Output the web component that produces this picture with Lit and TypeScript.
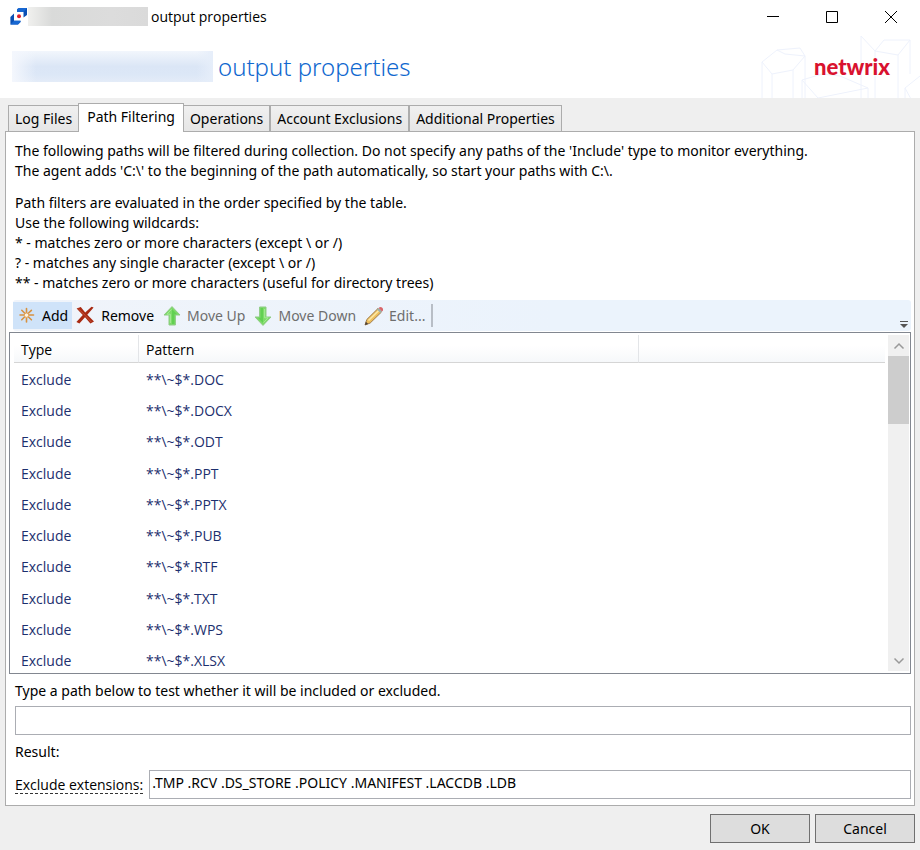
import { LitElement, html, css, svg } from "lit";
import { customElement, state } from "lit/decorators.js";
import { classMap } from "lit/directives/class-map.js";

const TABS = ["Log Files", "Path Filtering", "Operations", "Account Exclusions", "Additional Properties"];

const PATTERNS = ["DOC", "DOCX", "ODT", "PPT", "PPTX", "PUB", "RTF", "TXT", "WPS", "XLSX"];

const arrow = (down: boolean) => svg`
  <g transform=${down ? "rotate(180 10 10)" : ""}>
    <path d="M10 0.6 L18 9 H13.4 V19 H7 V9 H2 Z" fill="#7ddb68" stroke="#8fcb85" stroke-width="1"/>
    <path d="M10 3 L15 8.2 H12.4 V18 H10 Z" fill="#62d052"/>
    <path d="M9.4 3.4 L5 8.2 H8.4 V17" fill="none" stroke="#a5eb94"/>
  </g>`;

const ICONS = {
  add: svg`
    <g stroke="#d8913f" stroke-width="1.6" stroke-linecap="round">
      <path d="M9.5 2.5 V7 M9.5 11.5 V16 M3 9 H7.5 M12 9 H16.5"/>
      <path d="M4.8 4.3 L8 7.5 M11 10.5 L14.4 13.8 M14.4 4.3 L11 7.5 M8 10.5 L4.8 13.8"/>
    </g>
    <circle cx="9.5" cy="9.2" r="2.2" fill="#fff3dc" stroke="#e0a25a" stroke-width="1"/>`,
  remove: svg`
    <path d="M0.6 2.4 L4.8 1 L9.2 6.4 L15.5 0.8 L17.6 1.6 L11.3 8.8 L18 15.4 L14.4 17.6 L9 11.2 L3.4 17.6 L0.4 16 L6.8 9 Z" fill="#a82a12"/>
    <path d="M2.4 2.8 L9.2 9.4 L15.3 16" fill="none" stroke="#c4543a" stroke-width="1"/>`,
  up: arrow(false),
  down: arrow(true),
  edit: svg`
    <path d="M1 19 L2.8 13.5 L14 2.5 L17.5 6 L6.2 17 Z" fill="#eebf5c" stroke="#a07c4a" stroke-width="1"/>
    <path d="M4.5 14.5 L14.8 4.5" stroke="#fbe8a5" stroke-width="1.6"/>
    <path d="M13 3.5 L14.6 2 L18 5.4 L16.5 7 Z" fill="#9fb0a8"/>
    <path d="M14.6 2 L16 1 Q19.5 1 19 4.5 L18 5.6 Z" fill="#d9666a"/>
    <path d="M1 19 L1.9 15.8 L4.2 18 Z" fill="#4a4038"/>`,
};

const TOOLS: { label: string; icon: keyof typeof ICONS; disabled?: boolean; hot?: boolean }[] = [
  { label: "Add", icon: "add", hot: true },
  { label: "Remove", icon: "remove" },
  { label: "Move Up", icon: "up", disabled: true },
  { label: "Move Down", icon: "down", disabled: true },
  { label: "Edit...", icon: "edit", disabled: true },
];

@customElement("app-root")
class AppRoot extends LitElement {
  @state() private tab = 1;

  static styles = css`
    :host {
      display: flex;
      flex-direction: column;
      min-height: 100vh;
      box-sizing: border-box;
      background: #efefef;
      color: #000;
      font: 14px/20px "Noto Sans", "Open Sans", sans-serif;
    }
    * { box-sizing: border-box; }
    button, input { font: inherit; color: inherit; border-radius: 0; }
    button { padding: 0; border: 0; background: none; white-space: nowrap; }
    p { margin: 0; }

    .titlebar { display: flex; align-items: center; height: 33px; padding-left: 10px; background: #fff; }
    .app-icon { width: 18px; height: 18px; }
    .masked { background: linear-gradient(90deg, #f0f0ee, #d9dad9 20%, #dcdcdc 70%, #dadada); width: 120px; height: 19px; }
    .title { flex: 1; padding-left: 3px; font-family: "Open Sans", sans-serif; }
    .caption { width: 59px; height: 33px; display: grid; place-items: center; }
    .caption svg { width: 12px; height: 12px; }

    .banner { display: flex; align-items: center; height: 65px; padding: 2px 0 0 12px; background: #fff; overflow: hidden; }
    .masked-name {
      width: 201px; height: 31px;
      background: linear-gradient(90deg, #f4f7fd, transparent 12%, transparent 92%, #e6eefa),
        linear-gradient(#f2f6fc, #dbe6f6 50%, #dce7f7 75%, #e4ecf8);
    }
    h1 {
      flex: 1; margin: 0; padding-left: 5px; color: #0f68cf;
      font: 300 24px/34px "Noto Sans", "Open Sans", sans-serif;
    }
    .brand { position: relative; width: 160px; height: 65px; display: flex; align-items: center; padding-left: 54px; }
    .brand .art { position: absolute; inset: 0; width: 160px; height: 65px; }
    .logo { position: relative; font: 900 22px/30px Lato, sans-serif; color: #d9122f; }

    .tabs { display: flex; align-items: flex-end; height: 33px; padding-left: 8px; }
    .tab {
      height: 26px; padding: 0 6px; border: 1px solid #acacac; border-bottom: 0;
      background: linear-gradient(#f0f0f0, #e6e6e6);
    }
    .tab.on { z-index: 1; height: 29px; margin: 0 -1px -1px; padding: 0 8px 2px; background: #fff; }

    .panel {
      flex: 1; display: flex; flex-direction: column; margin: 0 5px;
      padding: 9px 3px 6px; border: 1px solid #acacac; background: #fff;
    }
    .note { padding: 0 6px; }
    .note + .note { margin-top: 12px; }

    .toolbar {
      display: flex; align-items: center; height: 31px; margin: 7px 0 1px 4px;
      background: linear-gradient(90deg, #f0f4fa, #ebf3fc 60%); border-radius: 3px;
    }
    .tool { display: flex; align-items: center; gap: 5px; height: 27px; padding: 0 4px; }
    .tool.hot { background: #cfe3f9; }
    .tool:disabled { color: #6e6e6e; }
    .tool svg { width: 20px; height: 20px; }
    .sep { width: 2px; height: 23px; margin-left: 2px; background: #b8bec6; }
    .more { margin-left: auto; align-self: flex-end; width: 14px; height: 14px; display: grid; place-items: center; }
    .more svg { width: 8px; height: 8px; }

    .list { flex: 1 1 0; min-height: 342px; display: flex; border: 1px solid #828790; padding: 2px 1px 2px 4px; }
    .viewport { flex: 1 1 0; height: 336px; overflow: hidden; }
    table {
      width: 100%; height: 341px; table-layout: fixed; border-collapse: separate; border-spacing: 0;
      font-family: "Open Sans", sans-serif;
    }
    th, td { padding: 2px 0 0 7px; text-align: left; font-weight: 400; }
    th { height: 28px; border-bottom: 1px solid #d5d5d5; background: linear-gradient(#fff 40%, #f6f8fa); }
    th + th { border-left: 1px solid #e3e5e8; }
    td { color: #1c2f6e; }
    td + td { padding-left: 8px; }
    .c-type { width: 124px; }
    .c-pattern { width: 500px; }
    .scroll { display: flex; flex-direction: column; width: 21px; margin-left: 3px; background: #f0f0f0; }
    .scroll button { height: 21px; display: grid; place-items: center; }
    .scroll svg { width: 12px; height: 8px; }
    .thumb { height: 68px; margin-bottom: auto; background: #cdcdcd; }

    .test { display: flex; flex-direction: column; gap: 5px; padding: 7px 0 0 6px; }
    .row { display: flex; align-items: center; gap: 6px; padding: 8px 0 0 6px; }
    input { height: 29px; min-width: 0; padding: 0 2px 4px; border: 1px solid #abadb3; background: #fff; outline: 0; }
    .row input { flex: 1; }
    .hint { line-height: 17px; border-bottom: 1px dashed #333; font-family: "Open Sans", sans-serif; }
    .result { padding: 7px 6px 0; }

    .footer { display: flex; justify-content: flex-end; gap: 5px; padding: 8px 5px 7px; }
    .footer button { width: 100px; height: 29px; padding-top: 1px; border: 1px solid #707070; background: #ddd; }
  `;

  render() {
    return html`
      <header class="titlebar">
        <svg class="app-icon" viewBox="0 0 18 18">
          <path d="M7 1.2 L9 0 H17 V7 L13.5 9.5 V4 H7 Z" fill="#0a50b4"/>
          <path d="M7 1.2 L9 0 H17 L13.5 4 H7 Z" fill="#1767d2"/>
          <path d="M4 5.5 V12.7 H10.5 V14 L8 16.6 H0.4 V9 Z" fill="#0a50b4"/>
          <path d="M0.4 16.6 L4 12.7 H10.5 V14 L8 16.6 Z" fill="#1767d2"/>
          <circle cx="9" cy="8.2" r="2" fill="#e0202c"/>
        </svg>
        <span class="masked"></span>
        <span class="title">output properties</span>
        <button class="caption" aria-label="Minimize">
          <svg viewBox="0 0 12 12"><path d="M0 5.5 H12" stroke="#000"/></svg>
        </button>
        <button class="caption" aria-label="Maximize">
          <svg viewBox="0 0 12 12"><path d="M0.5 0.5 H11.5 V11.5 H0.5 Z" fill="none" stroke="#000"/></svg>
        </button>
        <button class="caption" aria-label="Close">
          <svg viewBox="0 0 12 12"><path d="M0 0 L12 12 M12 0 L0 12" stroke="#000"/></svg>
        </button>
      </header>

      <section class="banner">
        <span class="masked-name"></span>
        <h1>output properties</h1>
        <div class="brand">
          <svg class="art" viewBox="0 0 160 65" fill="none" stroke="#eef2fc">
            <path d="M2 28 L17 16 L40 14 L45 22 L33 36 L12 40 Z M2 28 V65 M12 40 V65 M33 36 V65 M45 22 V65 M17 16 L25 20 L45 22"/>
            <path d="M42 46 L62 40 L80 42 L108 54 V65 M42 46 L58 64 M42 46 V65 M58 64 L108 54"/>
            <path d="M101 2 L115 17 V65 M101 2 V65 M115 17 L124 6 H150 L138 21 Z M138 21 V65 M150 6 V40"/>
            <path d="M145 54 L160 42 M145 54 L151 65 M145 54 V65"/>
          </svg>
          <span class="logo">netwrix</span>
        </div>
      </section>

      <nav class="tabs" role="tablist">
        ${TABS.map((t, i) => html`
          <button role="tab" aria-selected=${i === this.tab ? "true" : "false"}
            class=${classMap({ tab: true, on: i === this.tab })}
            @click=${() => (this.tab = i)}>${t}</button>`)}
      </nav>

      <main class="panel">
        <div class="note">
          <p>The following paths will be filtered during collection. Do not specify any paths of the 'Include' type to monitor everything.</p>
          <p>The agent adds 'C:\\' to the beginning of the path automatically, so start your paths with C:\\.</p>
        </div>
        <div class="note">
          <p>Path filters are evaluated in the order specified by the table.</p>
          <p>Use the following wildcards:</p>
          <p>* - matches zero or more characters (except \\ or /)</p>
          <p>? - matches any single character (except \\ or /)</p>
          <p>** - matches zero or more characters (useful for directory trees)</p>
        </div>

        <div class="toolbar" role="toolbar">
          ${TOOLS.map((t) => html`
            <button class=${classMap({ tool: true, hot: !!t.hot })} ?disabled=${t.disabled}>
              <svg viewBox="0 0 20 20">${ICONS[t.icon]}</svg>${t.label}
            </button>`)}
          <span class="sep"></span>
          <button class="more" aria-label="More">
            <svg viewBox="0 0 8 8"><path d="M0 1.5 H8" stroke="#555"/><path d="M0 4 H8 L4 8 Z" fill="#555"/></svg>
          </button>
        </div>

        <div class="list">
          <div class="viewport">
            <table>
              <colgroup><col class="c-type"><col class="c-pattern"><col></colgroup>
              <thead><tr><th>Type</th><th>Pattern</th><th></th></tr></thead>
              <tbody>
                ${PATTERNS.map((p) => html`<tr><td>Exclude</td><td>**\\~$*.${p}</td><td></td></tr>`)}
              </tbody>
            </table>
          </div>
          <div class="scroll">
            <button aria-label="Scroll up">
              <svg viewBox="0 0 12 8"><path d="M1.5 6.5 L6 2 L10.5 6.5" fill="none" stroke="#999" stroke-width="1.5"/></svg>
            </button>
            <div class="thumb"></div>
            <button aria-label="Scroll down">
              <svg viewBox="0 0 12 8"><path d="M1.5 1.5 L6 6 L10.5 1.5" fill="none" stroke="#999" stroke-width="1.5"/></svg>
            </button>
          </div>
        </div>

        <div class="test">
          <label for="path">Type a path below to test whether it will be included or excluded.</label>
          <input id="path" type="text">
        </div>
        <p class="result">Result:</p>
        <div class="row">
          <label class="hint" for="ext">Exclude extensions:</label>
          <input id="ext" type="text" value=".TMP .RCV .DS_STORE .POLICY .MANIFEST .LACCDB .LDB">
        </div>
      </main>

      <footer class="footer">
        <button>OK</button>
        <button>Cancel</button>
      </footer>
    `;
  }
}
